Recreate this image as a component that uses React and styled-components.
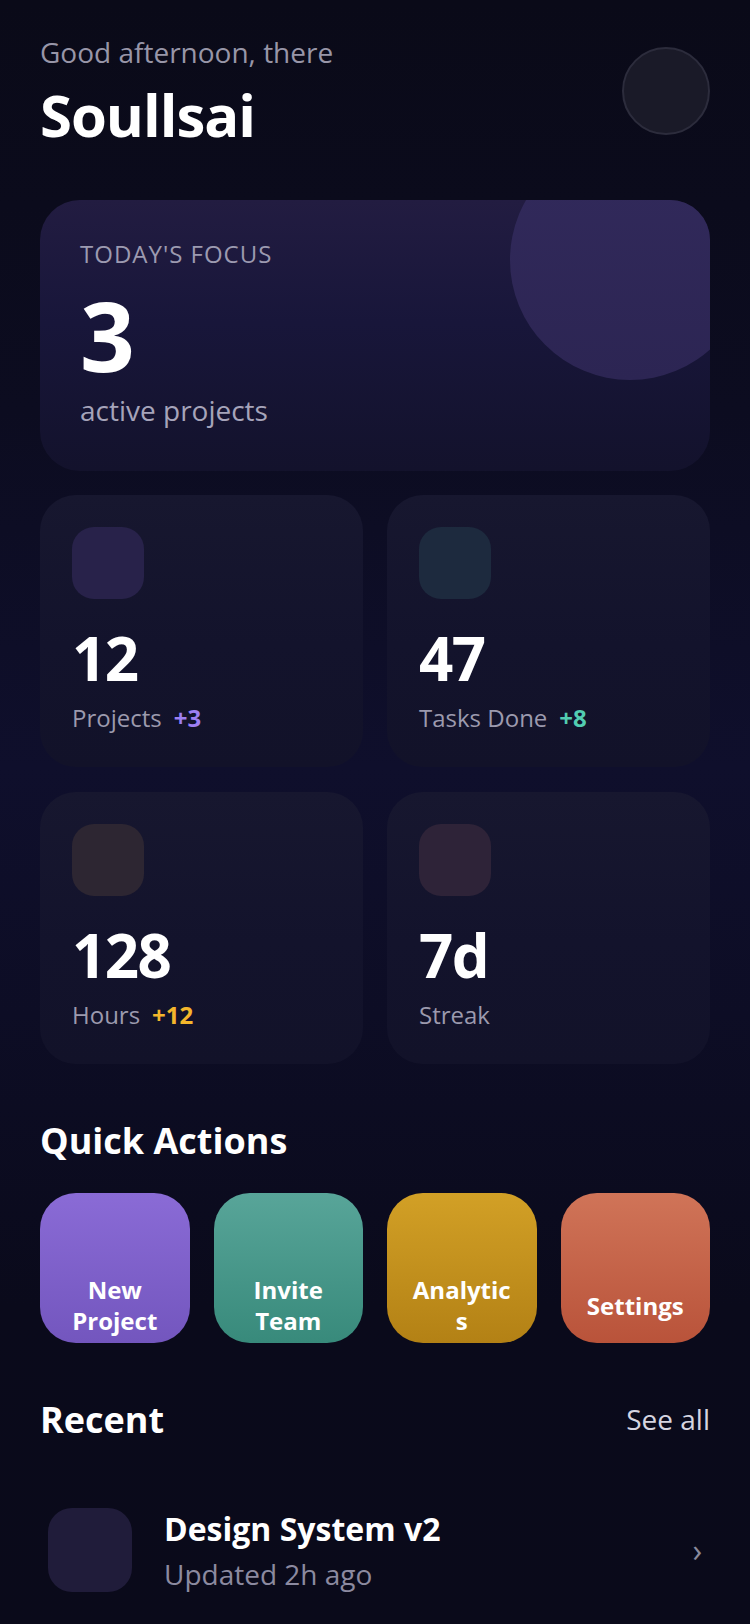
import React from 'react';
import styled, { createGlobalStyle } from 'styled-components';

const GlobalStyle = createGlobalStyle`
  * {
    box-sizing: border-box;
  }
  html,
  body {
    margin: 0;
    padding: 0;
    background: #0b0b1a;
  }
  body {
    font-family: 'Open Sans', 'Noto Sans', sans-serif;
    color: #ffffff;
    -webkit-font-smoothing: antialiased;
  }
`;

const stats = [
  { value: '12', label: 'Projects', delta: '+3', tone: '#9d7ff2', tile: '#28224a' },
  { value: '47', label: 'Tasks Done', delta: '+8', tone: '#52cdb1', tile: '#1d2a3e' },
  { value: '128', label: 'Hours', delta: '+12', tone: '#f4b62c', tile: '#2d2632' },
  { value: '7d', label: 'Streak', delta: null, tone: null, tile: '#2e2338' },
];

const actions = [
  { label: 'New Project', from: '#8a6bd6', to: '#7356be' },
  { label: 'Invite Team', from: '#58a599', to: '#388a7b' },
  { label: 'Analytics', from: '#d2a026', to: '#b38115' },
  { label: 'Settings', from: '#d07458', to: '#b9533a' },
];

function App() {
  return (
    <>
      <GlobalStyle />
      <Page>
        {/* 인사말 + 아바타 */}
        <Header>
          <div>
            <Greeting>Good afternoon, there</Greeting>
            <UserName>Soullsai</UserName>
          </div>
          <Avatar />
        </Header>

        {/* 오늘의 포커스 카드 */}
        <FocusCard>
          <FocusBlob />
          <FocusLabel>Today's focus</FocusLabel>
          <FocusCount>3</FocusCount>
          <FocusCaption>active projects</FocusCaption>
        </FocusCard>

        {/* 통계 카드 */}
        <StatGrid>
          {stats.map((s) => (
            <StatCard key={s.label}>
              <StatTile $bg={s.tile} />
              <StatValue>{s.value}</StatValue>
              <StatLabelRow>
                <StatLabel>{s.label}</StatLabel>
                {s.delta && <StatDelta $color={s.tone}>{s.delta}</StatDelta>}
              </StatLabelRow>
            </StatCard>
          ))}
        </StatGrid>

        <SectionTitle>Quick Actions</SectionTitle>
        <ActionGrid>
          {actions.map((a) => (
            <ActionButton key={a.label} $from={a.from} $to={a.to}>
              <ActionIcon />
              <ActionLabel>{a.label}</ActionLabel>
            </ActionButton>
          ))}
        </ActionGrid>

        <RecentHeader>
          <SectionHeading>Recent</SectionHeading>
          <SeeAll>See all</SeeAll>
        </RecentHeader>
        <RecentItem>
          <RecentThumb />
          <RecentText>
            <RecentTitle>Design System v2</RecentTitle>
            <RecentMeta>Updated 2h ago</RecentMeta>
          </RecentText>
          <Chevron>›</Chevron>
        </RecentItem>
      </Page>
    </>
  );
}

export default App;

const Page = styled.div`
  min-height: 1624px;
  padding: 33px 40px 24px;
  background: linear-gradient(
    180deg,
    #0a0a18 0%,
    #0c0c20 25%,
    #0f0f2c 47%,
    #0d0d25 62%,
    #0a0a1b 80%,
    #0a0a1a 100%
  );
`;

const Header = styled.header`
  display: flex;
  justify-content: space-between;
  align-items: center;
  margin-bottom: 50px;
`;

const Greeting = styled.p`
  margin: 0 0 9px;
  font-size: 28px;
  color: #9896a8;
`;

const UserName = styled.h1`
  margin: 0;
  font-size: 58px;
  line-height: 1.2;
  font-weight: 700;
  letter-spacing: -1px;
`;

const Avatar = styled.div`
  width: 88px;
  height: 88px;
  border-radius: 50%;
  background: #1a1a28;
  border: 2px solid #2c2c3c;
`;

const FocusCard = styled.section`
  position: relative;
  overflow: hidden;
  padding: 40px 40px 42px;
  border-radius: 40px;
  background: linear-gradient(180deg, #221c41 0%, #18163a 45%, #13122c 100%);
`;

const FocusBlob = styled.div`
  position: absolute;
  top: -60px;
  right: -40px;
  width: 240px;
  height: 240px;
  border-radius: 50%;
  background: linear-gradient(180deg, #322a5c 0%, #2c2553 100%);
`;

const FocusLabel = styled.p`
  position: relative;
  margin: 0;
  font-size: 24px;
  line-height: 1.2;
  letter-spacing: 1px;
  text-transform: uppercase;
  color: #9c9ab0;
`;

const FocusCount = styled.div`
  position: relative;
  margin-top: 19px;
  font-size: 96px;
  line-height: 1;
  font-weight: 700;
`;

const FocusCaption = styled.p`
  position: relative;
  margin: 8px 0 0;
  font-size: 28px;
  color: #a6a4ba;
`;

const StatGrid = styled.div`
  display: grid;
  grid-template-columns: 1fr 1fr;
  gap: 25px 24px;
  margin-top: 24px;
`;

const StatCard = styled.div`
  padding: 32px 32px 33px;
  border-radius: 36px;
  background: linear-gradient(180deg, #17172f 0%, #13132c 55%, #121229 100%);
`;

const StatTile = styled.div`
  width: 72px;
  height: 72px;
  border-radius: 22px;
  background: ${(p) => p.$bg};
  margin-bottom: 29px;
`;

const StatValue = styled.div`
  font-size: 60px;
  line-height: 1;
  font-weight: 700;
  letter-spacing: -1.5px;
  margin-bottom: 13px;
`;

const StatLabelRow = styled.div`
  display: flex;
  align-items: baseline;
  gap: 12px;
`;

const StatLabel = styled.span`
  font-size: 24px;
  color: #9c9aae;
`;

const StatDelta = styled.span`
  font-size: 24px;
  font-weight: 700;
  color: ${(p) => p.$color};
`;

const SectionHeading = styled.h2`
  margin: 0;
  font-size: 36px;
  font-weight: 700;
`;

const SectionTitle = styled(SectionHeading)`
  margin: 52px 0 28px;
`;

const ActionGrid = styled.div`
  display: grid;
  grid-template-columns: repeat(4, 1fr);
  gap: 24px;
`;

const ActionButton = styled.button`
  aspect-ratio: 1;
  border: none;
  border-radius: 36px;
  padding: 0 22px;
  display: flex;
  flex-direction: column;
  align-items: center;
  justify-content: center;
  font-family: inherit;
  color: #ffffff;
  background: linear-gradient(180deg, ${(p) => p.$from} 0%, ${(p) => p.$to} 100%);
`;

const ActionIcon = styled.span`
  display: block;
  height: 66px;
  margin-bottom: 8px;
`;

const ActionLabel = styled.span`
  font-size: 24px;
  line-height: 1.3;
  font-weight: 700;
  text-align: center;
  overflow-wrap: anywhere;
`;

const RecentHeader = styled.div`
  display: flex;
  justify-content: space-between;
  align-items: center;
  margin: 52px 0 47px;
`;

const SeeAll = styled.span`
  font-size: 28px;
  color: #d6d5e0;
`;

const RecentItem = styled.div`
  display: flex;
  align-items: center;
  padding: 16px 8px;
`;

const RecentThumb = styled.div`
  flex: none;
  width: 84px;
  height: 84px;
  border-radius: 24px;
  background: #201c3a;
  margin-right: 32px;
`;

const RecentText = styled.div`
  flex: 1;
`;

const RecentTitle = styled.div`
  font-size: 32px;
  font-weight: 700;
  margin-bottom: 5px;
`;

const RecentMeta = styled.div`
  font-size: 28px;
  color: #8c8aa0;
`;

const Chevron = styled.span`
  font-size: 32px;
  color: #8a8a9c;
`;
